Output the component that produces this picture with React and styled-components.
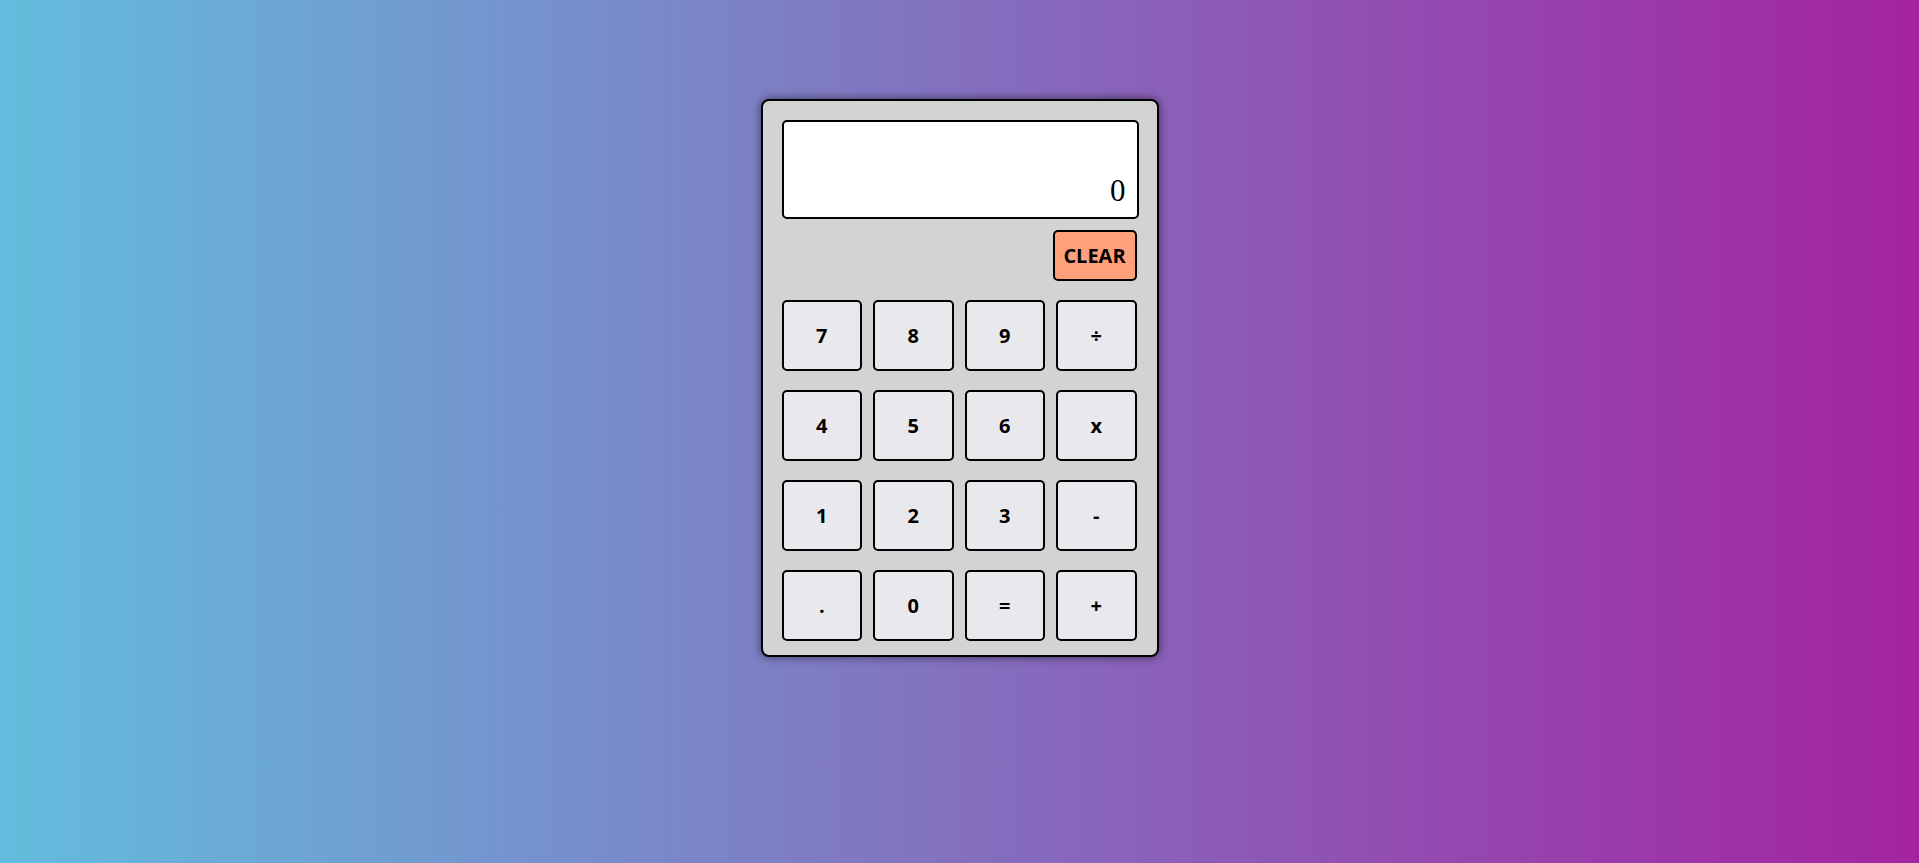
import React, { useState } from 'react';
import styled, { createGlobalStyle } from 'styled-components';

const GlobalStyle = createGlobalStyle`
  html, body {
    margin: 0;
    padding: 0;
    height: 100%;
  }

  body {
    font-family: 'Open Sans', 'Liberation Sans', sans-serif;
  }
`;

const KEYS = ['7', '8', '9', '÷', '4', '5', '6', 'x', '1', '2', '3', '-', '.', '0', '=', '+'];

export default function App() {
  const [value] = useState('0');

  return (
    <>
      <GlobalStyle />
      <Page>
        <Calculator>
          <Display>{value}</Display>

          <Pad>
            <ClearRow>
              <Key $clear>CLEAR</Key>
            </ClearRow>

            <Keys>
              {KEYS.map((k) => (
                <Key key={k}>{k}</Key>
              ))}
            </Keys>
          </Pad>
        </Calculator>
      </Page>
    </>
  );
}

const Page = styled.main`
  box-sizing: border-box;
  display: flex;
  justify-content: center;
  align-items: flex-start;

  width: 100%;
  min-height: 100vh;
  padding-top: 99px;

  background: linear-gradient(to right, #63bddd, #a423a1);
`;

const Calculator = styled.div`
  box-sizing: border-box;
  width: 398px;
  padding: 19px 18px 14px 19px;

  background-color: #d3d3d3;
  border: 2px solid #000;
  border-radius: 8px;
  box-shadow: 0 0 10px rgba(0, 0, 0, 0.55);
`;

const Display = styled.div`
  box-sizing: border-box;
  display: flex;
  align-items: flex-end;
  justify-content: flex-end;

  height: 99px;
  padding: 0 11px 8px;

  background-color: #fff;
  border: 2px solid #000;
  border-radius: 5px;

  font-family: 'Liberation Serif', 'Times New Roman', serif;
  font-size: 31px;
  color: #000;
`;

const Pad = styled.div`
  width: 355px;
`;

const ClearRow = styled.div`
  display: flex;
  justify-content: flex-end;

  margin: 11px 0 19px;
`;

const Keys = styled.div`
  display: grid;
  grid-template-columns: repeat(4, 80.5px);
  grid-auto-rows: 71px;
  column-gap: 11px;
  row-gap: 19px;
`;

const Key = styled.button`
  box-sizing: border-box;
  display: flex;
  align-items: center;
  justify-content: center;

  width: ${(p) => (p.$clear ? '84px' : '100%')};
  height: ${(p) => (p.$clear ? '51px' : '100%')};
  padding: 0;

  background-color: ${(p) => (p.$clear ? '#ffa07a' : '#e9e8ec')};
  border: 2px solid #000;
  border-radius: 5px;

  font-family: 'Open Sans', 'Liberation Sans', sans-serif;
  font-size: 20px;
  font-weight: 700;
  color: #000;
  cursor: pointer;
`;
